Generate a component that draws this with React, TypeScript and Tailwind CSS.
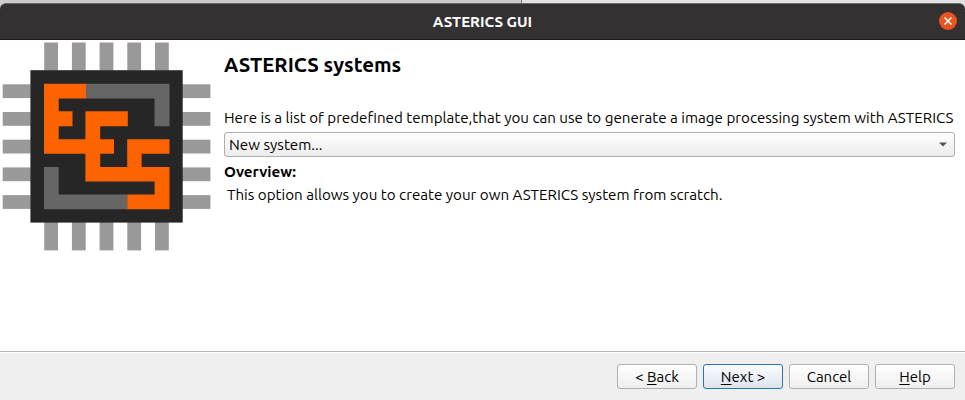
import React from "react";

const pins = [0, 1, 2, 3, 4];

function ChipLogo() {
  return (
    <svg width="210" height="211" viewBox="2 41 210 211" className="block">
      <g fill="#999999">
        {pins.map((i) => (
          <g key={i}>
            <rect x={44.2 + i * 27.7} y="42.5" width="13.8" height="28" />
            <rect x={44.2 + i * 27.7} y="222" width="13.8" height="28.4" />
            <rect x="2.7" y={84.3 + i * 27.7} width="28" height="13.8" />
            <rect x="182" y={84.3 + i * 27.7} width="28.4" height="13.8" />
          </g>
        ))}
      </g>
      <rect x="30.4" y="70.2" width="152.3" height="152.4" fill="#262626" />
      <g fill="#666666">
        <path d="M86 83.8H169.5V126.2H154.5V98.5H86Z" />
        <path d="M44 167H58.7V194.4H127.2V209.3H44Z" />
      </g>
      <g fill="#ff6300">
        <path d="M44 83.8H86V98.5H58.7V111.3H72.5V126.2H58.7V139.2H85.4V111.3H127.8V126.2H100.2V139.2H114V153.7H100.2V167H127.2V139.2H169.5V153.7H141.6V167H169.5V209.3H127.2V194.4H154.6V181.6H85.4V153.7H44Z" />
      </g>
    </svg>
  );
}

function DialogButton({ children, primary = false }: { children: React.ReactNode; primary?: boolean }) {
  return (
    <button
      className={
        "flex h-[25px] w-20 items-center justify-center rounded-[3px] border bg-linear-to-b text-[15px] leading-none whitespace-pre " +
        (primary ? "border-[#2a76a6] from-[#fbfcfd] to-[#dce4ec]" : "border-[#b0b0b0] from-[#fefefe] to-[#eeeeee]")
      }
    >
      {children}
    </button>
  );
}

function Key({ children }: { children: React.ReactNode }) {
  return <span className="underline decoration-1 underline-offset-2 [text-decoration-skip-ink:none]">{children}</span>;
}

export default function App() {
  return (
    <div className="flex h-[400px] w-[965px] flex-col overflow-hidden bg-white font-['Ubuntu','Noto_Sans',sans-serif] text-[15.17px] text-black">
      <div className="flex h-10 shrink-0 flex-col bg-linear-to-r from-[#cccccc] from-54% to-[#e2e2e2] to-54%">
        <div className="flex h-[3px]">
          <div className="ml-[521px] w-px bg-[#777777]" />
        </div>
        <header className="grid h-[37px] grid-cols-[1fr_auto_1fr] items-center rounded-t-[6px] border-t border-b border-t-[#6b6b6b] border-b-[#1c1a1b] bg-[#333132]">
          <span />
          <h1 className="text-[15.1px] leading-5 font-bold text-white">ASTERICS GUI</h1>
          <button aria-label="Close" className="mr-2 mb-px flex size-[18px] items-center justify-center justify-self-end rounded-full bg-[#e95420]">
            <svg width="8" height="8" viewBox="0 0 8 8" stroke="white" strokeWidth="1.5">
              <path d="M.5 .5L7.5 7.5M7.5 .5L.5 7.5" />
            </svg>
          </button>
        </header>
      </div>
      <main className="flex h-[311px] shrink-0 pt-px">
        <div className="ml-[2px] w-[222px] shrink-0">
          <ChipLogo />
        </div>
        <section className="w-[731px] whitespace-nowrap">
          <h2 className="mt-[10px] h-[28px] text-[20.4px] leading-[28px] font-bold">ASTERICS systems</h2>
          <p className="mt-[29px] h-5 leading-5">Here is a list of predefined template,that you can use to generate a image processing system with ASTERICS</p>
          <div className="mt-1 flex h-[25px] items-center justify-between rounded-[3px] border border-[#adadad] bg-linear-to-b from-[#fefefe] to-[#ececec] pr-[7px] pl-1">
            <span className="pt-px leading-5">New system...</span>
            <svg width="8" height="5" viewBox="0 0 8 5" fill="#555555"><path d="M0 .5H8L4 4.5Z" /></svg>
          </div>
          <p className="mt-[5px] h-5 leading-5 font-bold">Overview:</p>
          <p className="mt-[3px] h-5 pl-[3px] leading-5">This option allows you to create your own ASTERICS system from scratch.</p>
        </section>
      </main>
      <footer className="flex h-[49px] shrink-0 justify-end gap-[6px] border-t border-[#b4b4b4] bg-[#efefef] pt-3 pr-[10px] shadow-[inset_0_1px_0_#ffffff]">
        <DialogButton><span>&lt; <Key>B</Key>ack</span></DialogButton>
        <DialogButton primary><span><Key>N</Key>ext &gt;</span></DialogButton>
        <DialogButton><span>Cancel</span></DialogButton>
        <DialogButton><span><Key>H</Key>elp</span></DialogButton>
      </footer>
    </div>
  );
}
